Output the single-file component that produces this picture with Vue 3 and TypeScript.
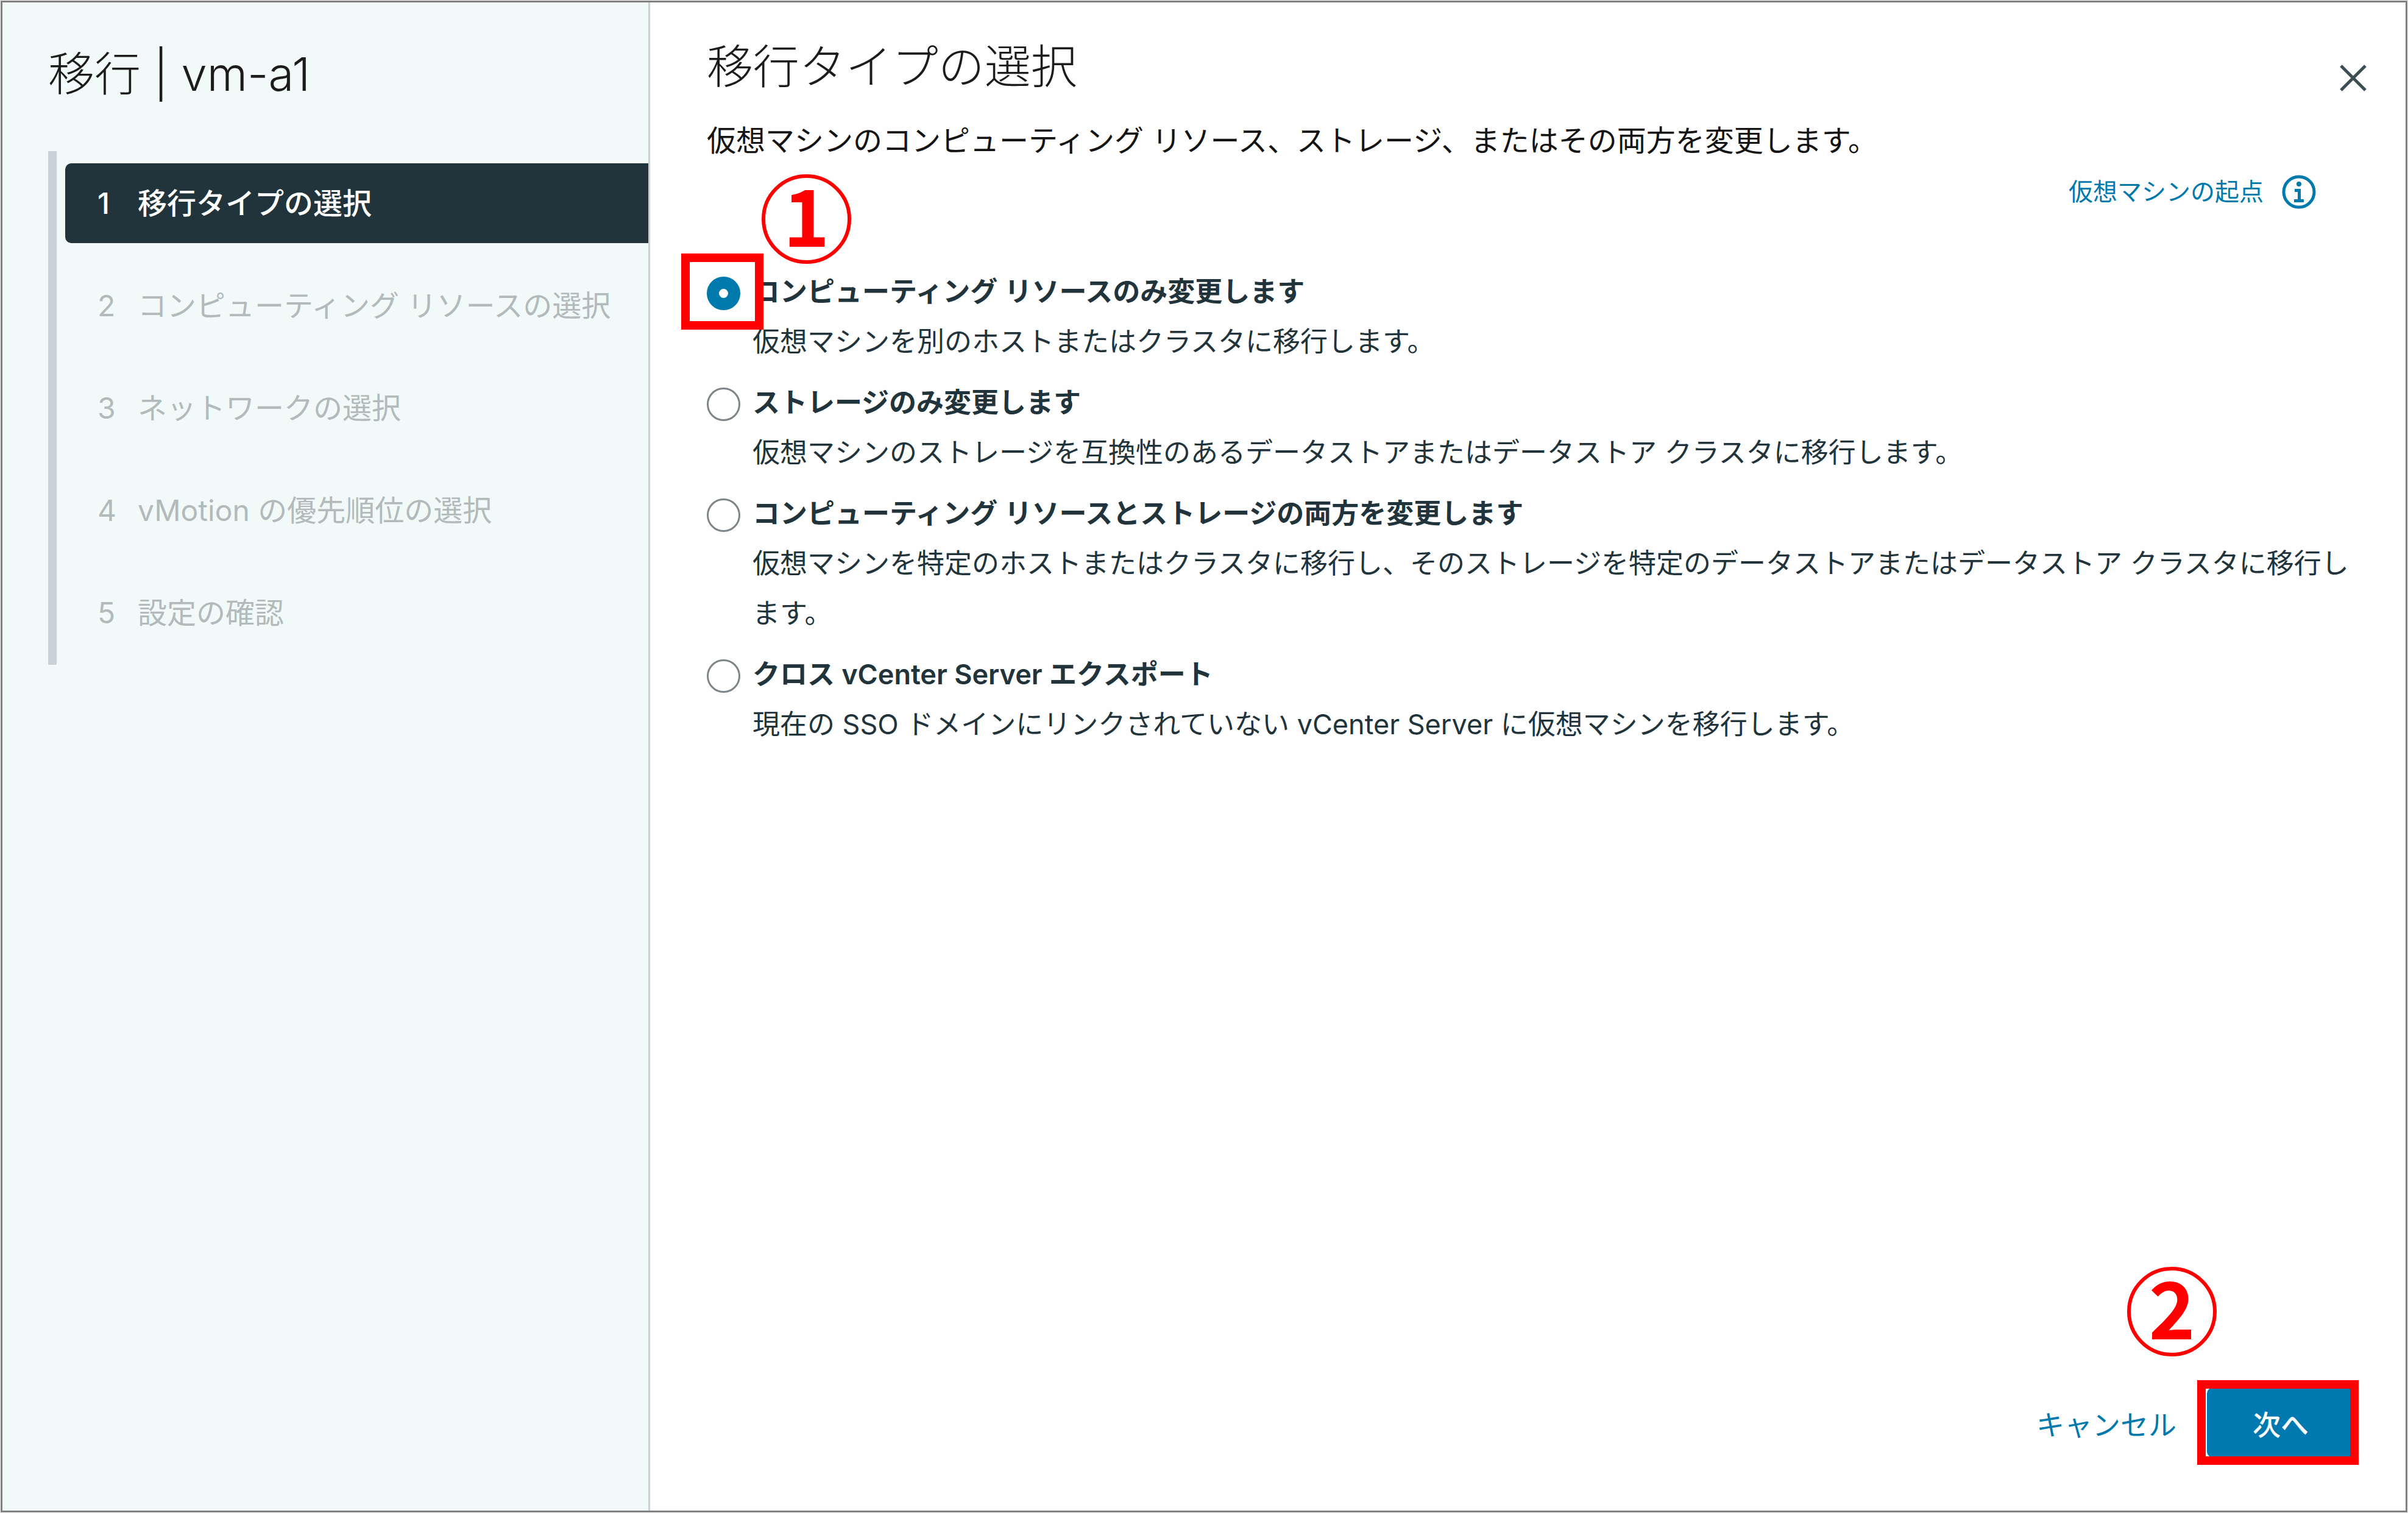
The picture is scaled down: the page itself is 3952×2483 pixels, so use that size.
<script setup lang="ts">
import { ref } from 'vue'

interface MigrationOption {
  id: string
  title: string
  detail: string
}

const steps: string[] = [
  '移行タイプの選択',
  'コンピューティング リソースの選択',
  'ネットワークの選択',
  'vMotion の優先順位の選択',
  '設定の確認',
]
const currentStep = ref(0)

const options: MigrationOption[] = [
  {
    id: 'compute',
    title: 'コンピューティング リソースのみ変更します',
    detail: '仮想マシンを別のホストまたはクラスタに移行します。',
  },
  {
    id: 'storage',
    title: 'ストレージのみ変更します',
    detail: '仮想マシンのストレージを互換性のあるデータストアまたはデータストア クラスタに移行します。',
  },
  {
    id: 'both',
    title: 'コンピューティング リソースとストレージの両方を変更します',
    detail:
      '仮想マシンを特定のホストまたはクラスタに移行し、そのストレージを特定のデータストアまたはデータストア クラスタに移行します。',
  },
  {
    id: 'cross',
    title: 'クロス vCenter Server エクスポート',
    detail: '現在の SSO ドメインにリンクされていない vCenter Server に仮想マシンを移行します。',
  },
]
const selected = ref('compute')
</script>

<template>
  <div class="wizard">
    <aside class="sidebar">
      <h1 class="sidebar-title">移行 | vm-a1</h1>
      <ol class="steps">
        <li v-for="(step, index) in steps" :key="step">
          <button
            type="button"
            class="step"
            :class="{ active: index === currentStep }"
            :disabled="index > currentStep"
          >
            <span class="step-number">{{ index + 1 }}</span>
            <span>{{ step }}</span>
          </button>
        </li>
      </ol>
    </aside>

    <main class="content">
      <header class="header">
        <div>
          <h2 class="title">移行タイプの選択</h2>
          <p class="lead">
            仮想マシンのコンピューティング リソース、ストレージ、またはその両方を変更します。
          </p>
        </div>
        <button type="button" class="close" aria-label="閉じる">
          <svg viewBox="0 0 44 44" aria-hidden="true">
            <path d="M2 2 42 42M42 2 2 42" />
          </svg>
        </button>
      </header>

      <a href="#" class="origin">
        <span>仮想マシンの起点</span>
        <svg viewBox="0 0 56 56" aria-hidden="true">
          <circle class="ring" cx="28" cy="28" r="25" />
          <circle class="dot" cx="28" cy="15" r="4" />
          <path class="stem" d="M21 23h10v17h5v5H20v-5h6V28h-5z" />
        </svg>
      </a>

      <div class="options" role="radiogroup" aria-label="移行タイプの選択">
        <div v-for="option in options" :key="option.id" class="option">
          <span class="radio-slot">
            <input
              :id="option.id"
              v-model="selected"
              type="radio"
              name="migration-type"
              :value="option.id"
            />
          </span>
          <div>
            <label class="option-title" :for="option.id">{{ option.title }}</label>
            <p class="option-detail">{{ option.detail }}</p>
          </div>
          <template v-if="option.id === 'compute'">
            <span class="frame frame-radio"></span>
            <span class="badge badge-radio">1</span>
          </template>
        </div>
      </div>

      <footer class="footer">
        <button type="button" class="cancel">キャンセル</button>
        <div class="next-slot">
          <button type="button" class="next">次へ</button>
          <span class="frame frame-next"></span>
          <span class="badge badge-next">2</span>
        </div>
      </footer>
    </main>
  </div>
</template>

<style>
body {
  padding: 1px;
  background: #ffffff;
}
</style>

<style scoped>
.wizard,
.wizard * {
  box-sizing: border-box;
}

.wizard {
  display: flex;
  min-height: calc(100vh - 2px);
  border: 3px solid #808080;
  background: #fefefe;
  color: #21333b;
  font-family: Inter, 'Noto Sans CJK JP', sans-serif;
  font-size: 45px;
  line-height: 82px;
}

h1,
h2,
p,
ol {
  margin: 0;
  padding: 0;
}

button {
  padding: 0;
  border: 0;
  background: none;
  color: inherit;
  font: inherit;
}

/* Sidebar */
.sidebar {
  flex: 0 0 calc(27% - 2px);
  padding-left: 75px;
  border-right: 3px solid #c9d1d3;
  background: #f1faf9;
}

.sidebar-title,
.title {
  color: #1c1c1c;
  font-size: 76px;
  font-weight: 300;
  line-height: 110px;
}

.sidebar-title {
  margin-top: 62px;
}

.steps {
  display: flex;
  flex-direction: column;
  gap: 37px;
  margin-top: 72px;
  padding: 20px 0 20px 14px;
  border-left: 14px solid #c9d3d5;
  list-style: none;
}

.step {
  display: flex;
  align-items: center;
  width: 100%;
  height: 131px;
  padding-left: 53px;
  border-radius: 10px 0 0 10px;
  color: #b2babb;
  font-size: 48px;
  text-align: left;
  white-space: nowrap;
}

.step.active {
  background: #21333b;
  color: #ffffff;
  font-weight: 500;
}

.step-number {
  flex: none;
  width: 66px;
}

/* Content */
.content {
  flex: 1;
  display: flex;
  flex-direction: column;
  min-width: 0;
  padding: 50px 64px 75px 93px;
}

.header {
  display: flex;
  justify-content: space-between;
  align-items: flex-start;
}

.lead {
  margin-top: 26px;
  color: #141414;
  font-size: 48px;
}

.close {
  display: flex;
  margin-top: 52px;
}

.close svg {
  width: 44px;
  height: 44px;
  fill: none;
  stroke: #3b4c53;
  stroke-width: 5;
}

.origin {
  display: flex;
  align-items: center;
  align-self: flex-end;
  gap: 30px;
  margin: 2px 83px 0 0;
  color: #0079ad;
  font-size: 40px;
  text-decoration: none;
}

.origin svg {
  width: 56px;
  height: 56px;
}

.ring {
  fill: none;
  stroke: #0079ad;
  stroke-width: 5;
}

.dot,
.stem {
  fill: #0079ad;
}

.options {
  display: flex;
  flex-direction: column;
  gap: 18px;
  margin-top: 82px;
}

.option {
  position: relative;
  display: flex;
  gap: 20px;
}

.radio-slot {
  display: flex;
  align-items: center;
  height: 86px;
}

input[type='radio'] {
  appearance: none;
  width: 55px;
  height: 55px;
  margin: 0;
  border: 3px solid #7d8588;
  border-radius: 50%;
  background: #ffffff;
}

input[type='radio']:checked {
  border: 20px solid #0079ad;
}

.option-title {
  display: block;
  font-weight: 600;
}

/* Callouts */
.frame {
  position: absolute;
  border: 14px solid #ff0000;
  pointer-events: none;
}

.frame-radio {
  top: -22px;
  left: -42px;
  width: 135px;
  height: 125px;
}

.frame-next {
  inset: -12px -7px -12px -16px;
}

.badge {
  position: absolute;
  display: flex;
  align-items: center;
  justify-content: center;
  width: 147px;
  height: 147px;
  border: 6px solid #ff0000;
  border-radius: 50%;
  color: #ff0000;
  font-family: 'Noto Sans CJK JP', sans-serif;
  font-size: 129px;
  font-weight: 700;
  line-height: 112px;
  padding-bottom: 22px;
}

.badge-radio {
  top: -152px;
  left: 90px;
}

.badge-next {
  top: -198px;
  left: -131px;
}

/* Footer */
.footer {
  display: flex;
  align-items: center;
  justify-content: flex-end;
  gap: 50px;
  margin: auto 20px 12px 0;
  font-size: 46px;
}

.cancel,
.next {
  padding-top: 6px;
}

.cancel {
  color: #0079ad;
}

.next-slot {
  position: relative;
}

.next {
  display: block;
  width: 242px;
  height: 115px;
  border-radius: 10px;
  background: #0079b0;
  color: #ffffff;
  font-weight: 500;
}
</style>
